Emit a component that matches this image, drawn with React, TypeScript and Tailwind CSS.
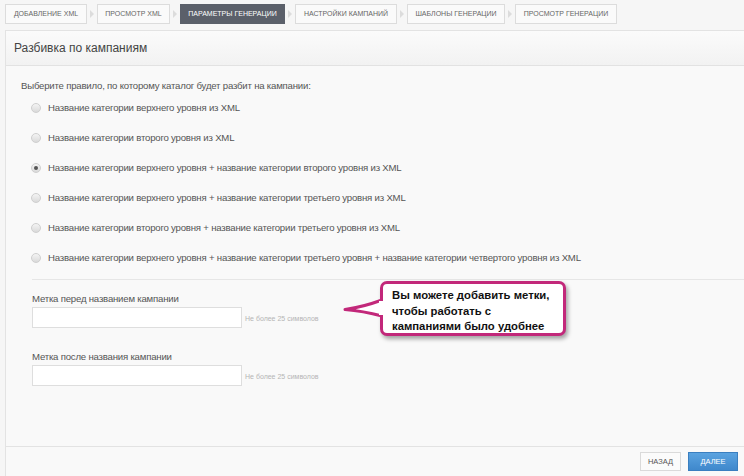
import React from 'react';

const steps = [
    { label: 'Добавление XML', w: 'w-[82px]' },
    { label: 'Просмотр XML', w: 'w-[73px]' },
    { label: 'Параметры генерации', w: 'w-[105px]', active: true },
    { label: 'Настройки кампаний', w: 'w-[102px]' },
    { label: 'Шаблоны генерации', w: 'w-[98px]' },
    { label: 'Просмотр генерации', w: 'w-[102px]' },
];

const rules = [
    'Название категории верхнего уровня из XML',
    'Название категории второго уровня из XML',
    'Название категории верхнего уровня + название категории второго уровня из XML',
    'Название категории верхнего уровня + название категории третьего уровня из XML',
    'Название категории второго уровня + название категории третьего уровня из XML',
    'Название категории верхнего уровня + название категории третьего уровня + название категории четвертого уровня из XML',
];

function StepArrow() {
    return (
        <svg width="10" height="20" viewBox="0 0 10 20" className="shrink-0">
            <path d="M3 6 L7 10 L3 14 Z" fill="#dcdcdc" />
        </svg>
    );
}

function Radio({ checked }: { checked?: boolean }) {
    return (
        <span className="w-[10px] h-[10px] rounded-full border border-[#cfcfcf] bg-gradient-to-b from-[#f4f4f4] to-[#dadada] flex items-center justify-center shrink-0">
            {checked && <span className="w-[4px] h-[4px] rounded-full bg-[#555]" />}
        </span>
    );
}

function LabelField({ label }: { label: string }) {
    return (
        <div className="flex flex-col">
            <div className="text-[9.6px] tracking-[-0.2px] text-[#555] leading-[12px] mb-[2px]">{label}</div>
            <div className="flex items-center">
                <div className="w-[210px] h-[21px] bg-white border border-[#dedede]" />
                <span className="ml-[3px] text-[7px] text-[#b5b5b5] mt-[3px]">Не более 25 символов</span>
            </div>
        </div>
    );
}

export default function App() {
    const selected = 2;

    return (
        <div
            className="w-[744px] h-[476px] bg-[#f6f6f6] overflow-hidden flex flex-col"
            style={{ fontFamily: '"Liberation Sans", Arial, sans-serif' }}
        >
            {/* Wizard steps */}
            <div className="flex items-center h-[20px] mt-[4px] ml-[5px]">
                {steps.map((s, i) => (
                    <React.Fragment key={s.label}>
                        {i > 0 && <StepArrow />}
                        <div
                            className={`${s.w} h-[20px] flex items-center justify-center uppercase text-[7px] border ${
                                s.active
                                    ? 'bg-[#5b606a] border-[#5b606a] text-white'
                                    : 'bg-[#fafafa] border-[#dcdcdc] text-[#666]'
                            }`}
                        >
                            {s.label}
                        </div>
                    </React.Fragment>
                ))}
            </div>

            {/* Panel */}
            <div className="relative flex-1 ml-[5px] mt-[6px] border-l border-t border-[#e3e3e3] bg-[#f9f9f9] flex flex-col">
                <div className="h-[35px] border-b border-[#e2e2e2] bg-gradient-to-b from-[#fbfbfb] to-[#f2f2f2] flex items-center pl-[8px]">
                    <h2 className="text-[12px] text-[#444]">Разбивка по кампаниям</h2>
                </div>

                <div className="flex-1 pl-[15px] pt-[14px]">
                    <p className="text-[9.6px] tracking-[-0.2px] text-[#555] leading-[12px]">
                        Выберите правило, по которому каталог будет разбит на кампании:
                    </p>

                    <div className="flex flex-col pl-[10px] mt-[10px] gap-[18px]">
                        {rules.map((r, i) => (
                            <label key={r} className="flex items-center gap-[7px] h-[12px]">
                                <Radio checked={i === selected} />
                                <span className="text-[9.6px] tracking-[-0.2px] text-[#555] whitespace-nowrap">{r}</span>
                            </label>
                        ))}
                    </div>

                    <div className="ml-[11px] mt-[15px] border-t border-[#e6e6e6]" />

                    <div className="ml-[11px] mt-[13px] flex flex-col gap-[23px]">
                        <LabelField label="Метка перед названием кампании" />
                        <LabelField label="Метка после названия кампании" />
                    </div>
                </div>

                {/* Footer */}
                <div className="h-[30px] border-t border-[#e3e3e3] flex items-center justify-end gap-[7px] pr-[6px]">
                    <button className="w-[41px] h-[19px] bg-[#fbfbfb] border border-[#dadada] text-[7.5px] text-[#555] uppercase">
                        Назад
                    </button>
                    <button className="w-[50px] h-[19px] bg-gradient-to-b from-[#5aa3e0] to-[#3f88cc] border border-[#3a7fc0] text-[7.5px] text-white uppercase">
                        Далее
                    </button>
                </div>

                {/* Hint callout */}
                <div className="absolute left-[337px] top-[250px] flex items-center">
                    <svg width="40" height="30" viewBox="0 0 40 30" className="-mr-[3px] z-10">
                        <path d="M39 6 Q20 13 2 15.5 Q20 17 39 22" fill="white" stroke="#c2287a" strokeWidth="3" strokeLinejoin="round" />
                        <rect x="36" y="7" width="5" height="14" fill="white" />
                    </svg>
                    <div className="w-[186px] h-[55px] bg-white border-[3px] border-[#c2287a] rounded-[7px] shadow-[2px_3px_4px_rgba(0,0,0,0.35)] pl-[9px] pt-[4px]">
                        <p className="text-[11.3px] font-bold text-[#111] leading-[15.5px]">
                            Вы можете добавить метки,
                            <br />
                            чтобы работать с
                            <br />
                            кампаниями было удобнее
                        </p>
                    </div>
                </div>
            </div>
        </div>
    );
}
